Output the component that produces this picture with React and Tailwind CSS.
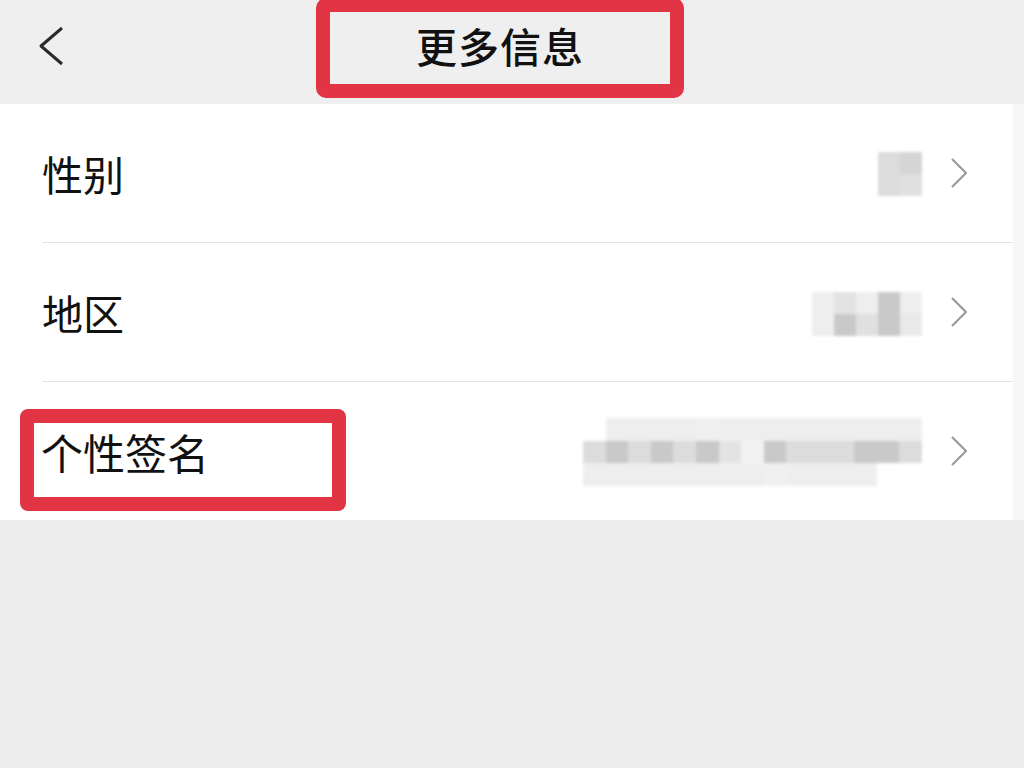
import React from "react";

const FONT = { fontFamily: '"Noto Sans CJK SC", "Noto Sans", sans-serif' };

function Chevron({ className = "" }) {
  return (
    <svg className={className} width="20" height="32" viewBox="0 0 20 32" fill="none">
      <path d="M3 2 L17 16 L3 30" stroke="#9a9a9a" strokeWidth="2.2" strokeLinejoin="round" />
    </svg>
  );
}

function Mosaic({ cells, cols, cell = 22, className = "" }) {
  return (
    <div
      className={"grid blur-[1.5px] " + className}
      style={{ gridTemplateColumns: `repeat(${cols}, ${cell}px)`, gridAutoRows: `${cell}px` }}
    >
      {cells.map((c, i) => (
        <div key={i} style={{ background: c }} />
      ))}
    </div>
  );
}

const W = "#ffffff";
const L = "#eeeeee";
const M = "#dcdcdc";
const D = "#c9c9c9";

export default function App() {
  return (
    <div className="w-full h-[768px] bg-[#ededed] flex flex-col overflow-hidden" style={FONT}>
      <header className="h-[104px] bg-[#efefef] grid grid-cols-[316px_368px_1fr] items-start">
        <div className="h-[92px] flex items-center pl-[36px]">
          <svg width="30" height="42" viewBox="0 0 30 42" fill="none">
            <path d="M26 3 L5 21 L26 39" stroke="#2b2b2b" strokeWidth="3" strokeLinejoin="round" />
          </svg>
        </div>
        <div className="mt-[-2px] h-[100px] border-[14px] border-[#e13545] rounded-[10px] flex items-center justify-center pb-[6px]">
          <span className="text-[41px] leading-none text-[#111] font-medium tracking-[1px]">更多信息</span>
        </div>
        <div />
      </header>

      <div className="flex">
        <div className="flex-1 bg-white">
          <div className="h-[139px] pl-[42px] flex">
            <div className="flex-1 flex items-center border-b border-[#e3e3e3] pr-[44px]">
              <span className="flex-1 text-[41px] leading-none text-[#111]">性别</span>
              <Mosaic cols={2} cell={22} cells={[M, "#d5d5d5", M, "#e0e0e0"]} className="mr-[27px] mt-[2px]" />
              <Chevron />
            </div>
          </div>
          <div className="h-[139px] pl-[42px] flex">
            <div className="flex-1 flex items-center border-b border-[#e3e3e3] pr-[44px]">
              <span className="flex-1 text-[41px] leading-none text-[#111]">地区</span>
              <Mosaic
                cols={5}
                cell={22}
                cells={[L, "#e3e3e3", L, D, L, L, D, "#e0e0e0", D, "#e9e9e9"]}
                className="mr-[27px] mt-[4px]"
              />
              <Chevron />
            </div>
          </div>
          <div className="h-[138px] pl-[20px] flex">
            <div className="flex-1 flex items-center pr-[44px]">
              <div className="flex-1 flex">
                <div className="w-[326px] h-[102px] mt-[18px] border-[14px] border-[#e13545] rounded-[8px] flex items-center pl-[7px] pb-[16px]">
                  <span className="text-[42px] leading-none text-[#111]">个性签名</span>
                </div>
              </div>
              <Mosaic
                cols={15}
                cell={22.6}
                cells={[
                  W, L, L, L, L, "#f0f0f0", L, L, L, L, L, L, L, L, L,
                  M, D, M, D, M, D, "#e3e3e3", "#f2f2f2", D, M, M, M, D, D, M,
                  L, L, L, L, L, L, L, L, "#f0f0f0", L, L, L, L, W, W,
                ]}
                className="mr-[27px] mt-[2px]"
              />
              <Chevron />
            </div>
          </div>
        </div>
        <div className="w-[11px] bg-[#f6f6f6]" />
      </div>

      <div className="flex-1 bg-[#ededed]" />
    </div>
  );
}
